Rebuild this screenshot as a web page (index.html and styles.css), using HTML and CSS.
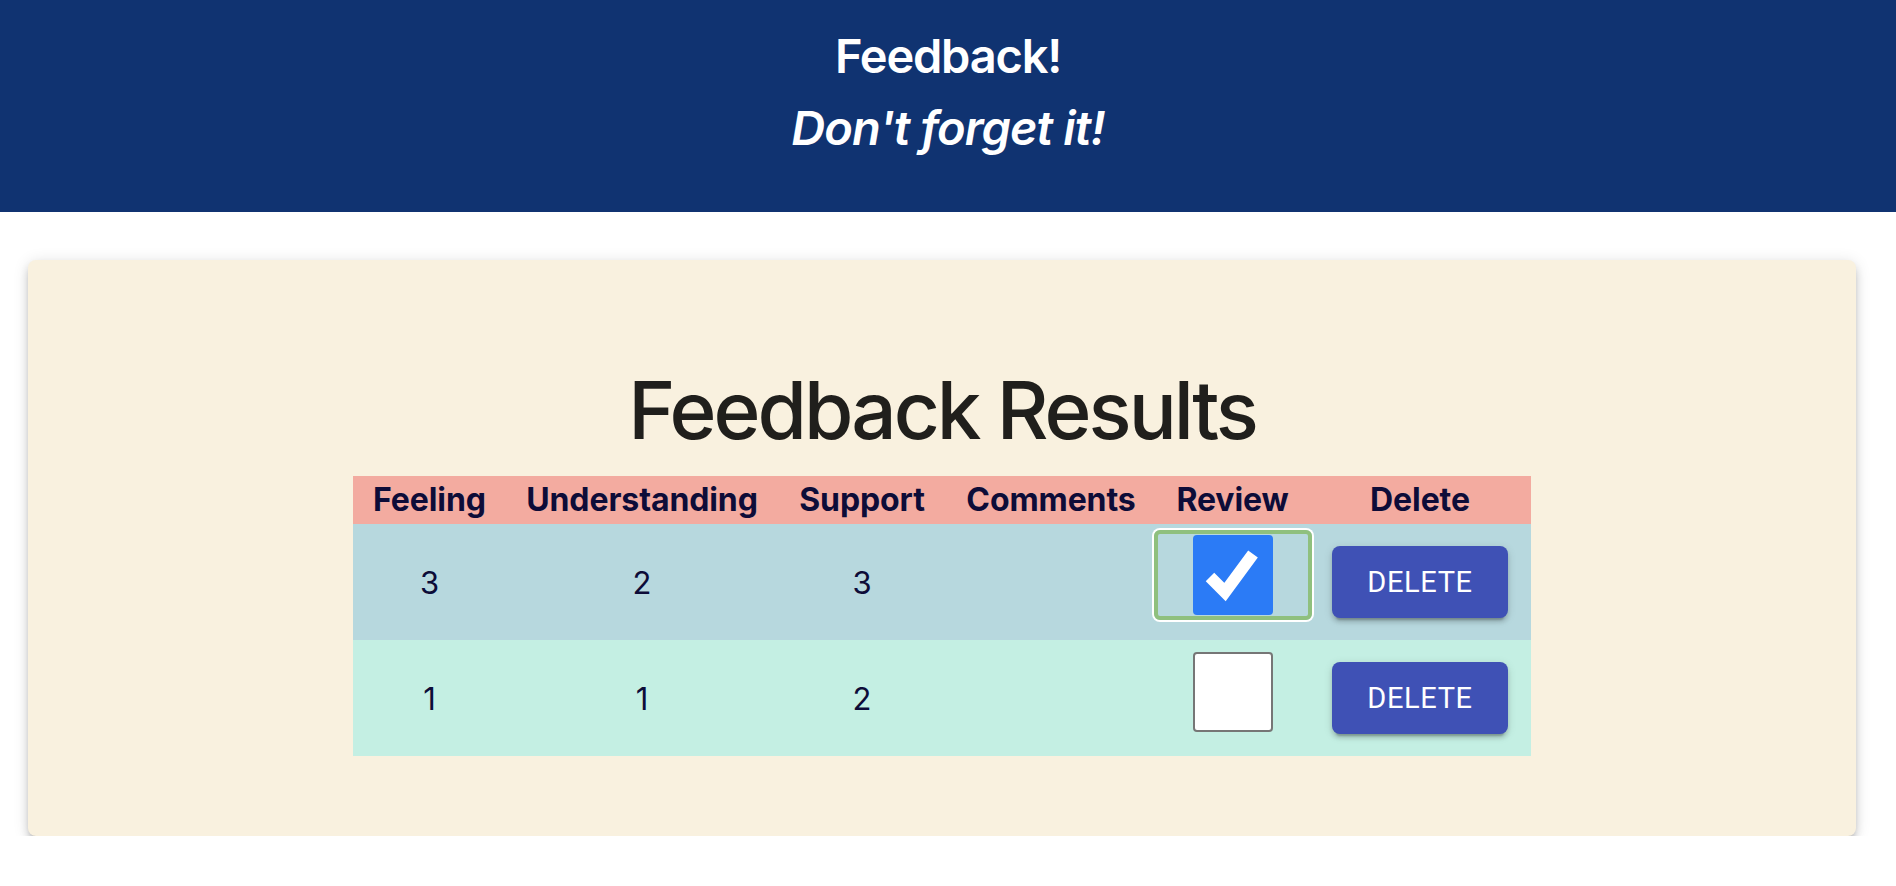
FILE: index.html
```html
<!DOCTYPE html>
<html lang="en">
<head>
<meta charset="utf-8">
<title>Feedback!</title>
<link rel="stylesheet" href="styles.css">
</head>
<body>
<header class="app-header">
  <h1 class="app-title">Feedback!</h1>
  <h4 class="app-tagline">Don't forget it!</h4>
</header>
<main class="content">
  <section class="card">
    <h2 class="results-title">Feedback Results</h2>
    <table class="results">
      <colgroup>
        <col class="c-feeling"><col class="c-under"><col class="c-support"><col class="c-comments"><col class="c-review"><col class="c-delete">
      </colgroup>
      <thead>
        <tr class="head-row">
          <th>Feeling</th><th>Understanding</th><th>Support</th><th>Comments</th><th>Review</th><th>Delete</th>
        </tr>
      </thead>
      <tbody>
        <tr class="row row-a">
          <td>3</td><td>2</td><td>3</td><td></td>
          <td><span class="focus-ring"><span class="checkbox checked"><svg viewBox="0 0 80 80" width="80" height="80"><path d="M17 42 L32 57 L60 19" fill="none" stroke="#fff" stroke-width="12" stroke-linecap="butt" stroke-linejoin="miter"/></svg></span></span></td>
          <td><button class="btn-delete">Delete</button></td>
        </tr>
        <tr class="row row-b">
          <td>1</td><td>1</td><td>2</td><td></td>
          <td><span class="checkbox"></span></td>
          <td><button class="btn-delete">Delete</button></td>
        </tr>
      </tbody>
    </table>
  </section>
</main>
</body>
</html>
```
FILE: styles.css
```css
html, body {
  margin: 0;
  padding: 0;
  background: #ffffff;
  font-family: "Inter", "Liberation Sans", sans-serif;
}

.app-header {
  background: #103371;
  height: 212px;
  box-sizing: border-box;
  padding-top: 20px;
  text-align: center;
  color: #ffffff;
}

.app-title {
  margin: 0;
  font-size: 47px;
  line-height: 72px;
  font-weight: 600;
  letter-spacing: -1.2px;
}

.app-tagline {
  margin: 0;
  font-size: 47px;
  line-height: 72px;
  font-weight: 600;
  font-style: italic;
  letter-spacing: -0.9px;
}

.content {
  padding: 48px 40px 0 28px;
}

.card {
  background: #f9f1df;
  border-radius: 8px;
  box-shadow: 0 6px 6px -4px rgba(0,0,0,0.2), 0 6px 8px 0 rgba(0,0,0,0.14), 0 2px 16px 0 rgba(0,0,0,0.12);
  padding: 110px 0 80px;
  display: flex;
  flex-direction: column;
  align-items: center;
}

.results-title {
  margin: 0 0 26px;
  font-size: 80px;
  line-height: 80px;
  font-weight: 500;
  color: #201f1c;
  letter-spacing: -3px;
}

.results {
  border-collapse: collapse;
  table-layout: fixed;
  width: 1178px;
  color: #0d0c38;
}

.c-feeling { width: 153px; }
.c-under { width: 272px; }
.c-support { width: 168px; }
.c-comments { width: 210px; }
.c-review { width: 153px; }
.c-delete { width: 222px; }

.results th,
.results td {
  padding: 0;
  text-align: center;
  white-space: nowrap;
}

.head-row {
  background: #f3aba0;
  height: 48px;
}

.head-row th {
  font-size: 32px;
  line-height: 48px;
  font-weight: 700;
  letter-spacing: -0.1px;
}

.row {
  height: 116px;
}

.row td {
  font-size: 31px;
  font-weight: 400;
  vertical-align: middle;
}

.row-a { background: #b7d8de; }
.row-b { background: #c4efe3; }

.focus-ring {
  display: inline-flex;
  justify-content: center;
  align-items: center;
  width: 158px;
  height: 90px;
  box-sizing: border-box;
  border: 4px solid #8fc07e;
  border-radius: 6px;
  box-shadow: 0 0 0 2px #ffffff;
  margin: 0 -4px;
  position: relative;
  top: -6px;
}

.checkbox {
  display: inline-block;
  width: 80px;
  height: 80px;
  box-sizing: border-box;
  background: #ffffff;
  border: 2px solid #767676;
  border-radius: 4px;
  vertical-align: middle;
  position: relative;
  top: -6px;
}

.checkbox.checked {
  background: #2b7bf6;
  border: none;
  top: 0;
}

.checkbox svg {
  display: block;
}

.btn-delete {
  font-family: "Roboto", "Liberation Sans", sans-serif;
  font-size: 29px;
  font-weight: 400;
  letter-spacing: 0.6px;
  text-transform: uppercase;
  color: #ffffff;
  background: #3f51b5;
  border: none;
  border-radius: 8px;
  width: 176px;
  height: 72px;
  padding: 0;
  cursor: pointer;
  box-shadow: 0 6px 2px -4px rgba(0,0,0,0.2), 0 4px 4px 0 rgba(0,0,0,0.14), 0 2px 10px 0 rgba(0,0,0,0.12);
  vertical-align: middle;
}
```
